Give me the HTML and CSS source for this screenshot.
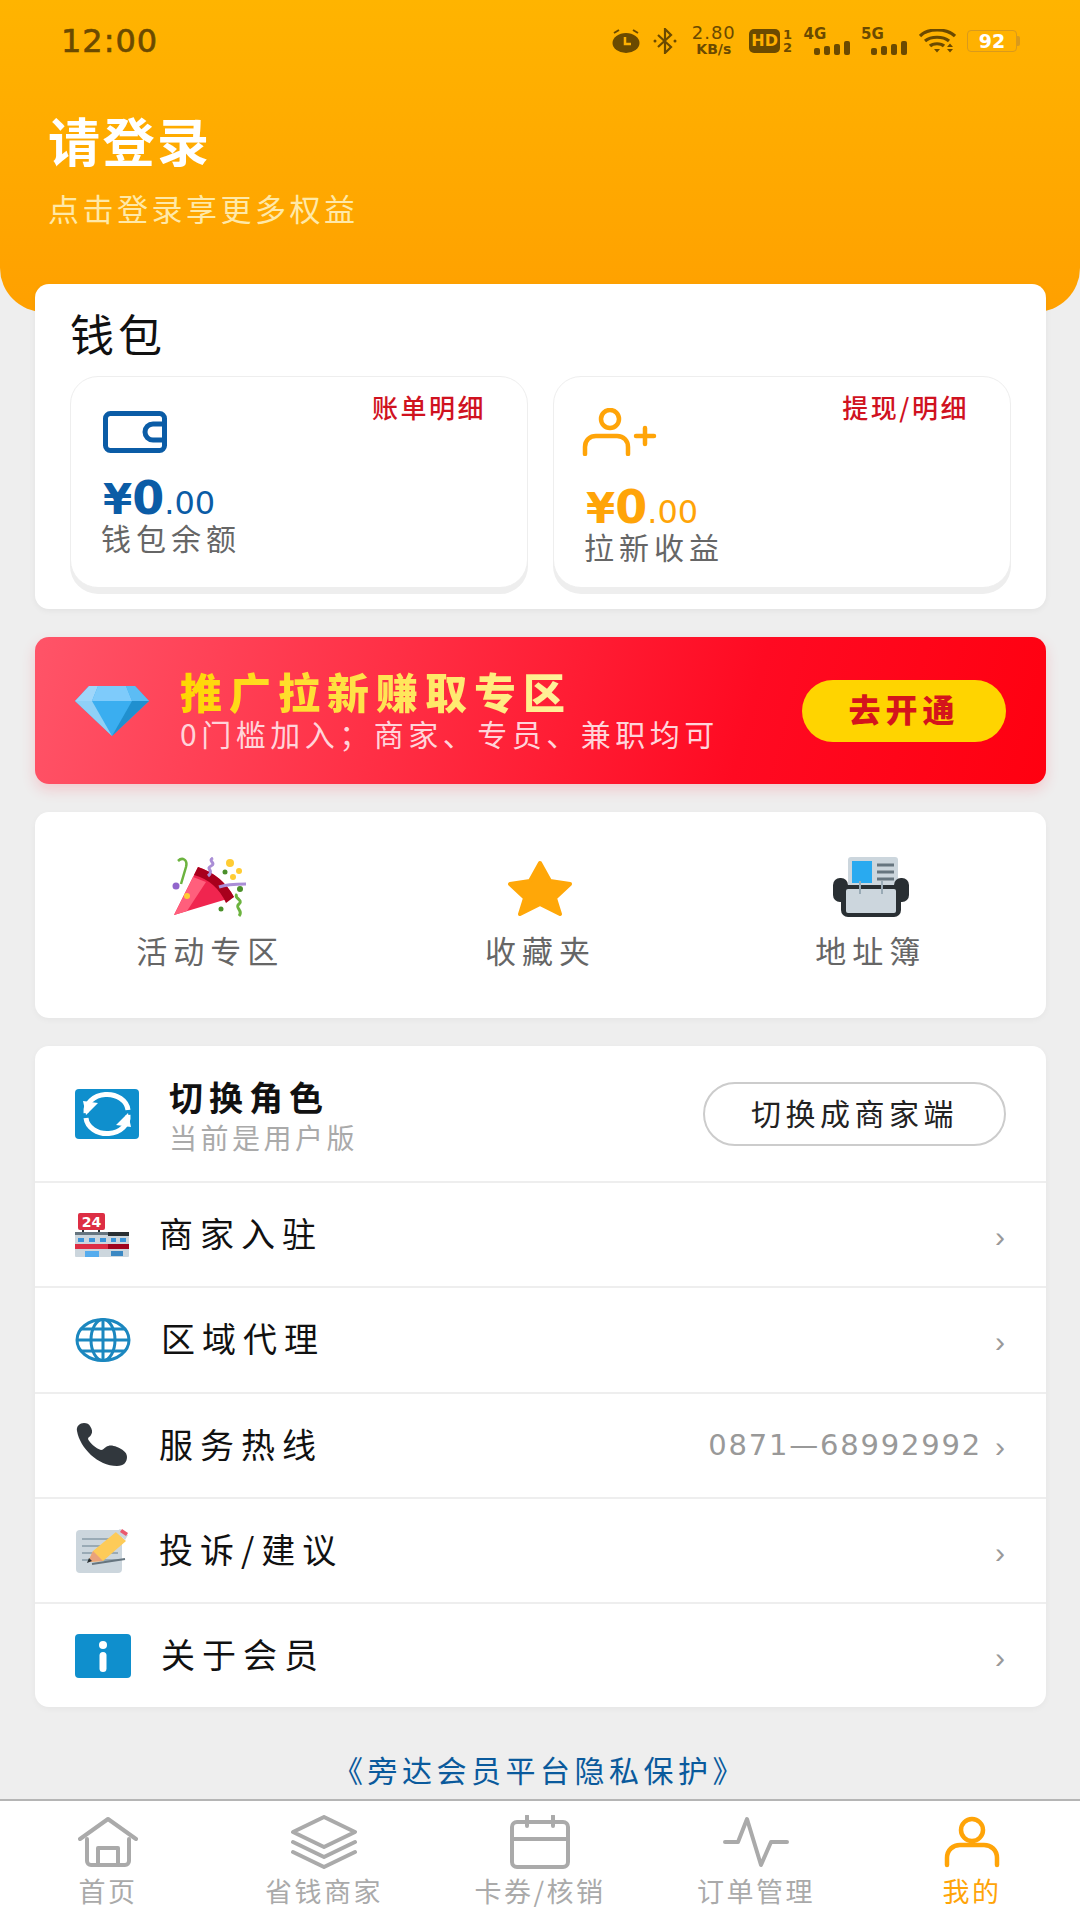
FILE: index.html
```html
<!DOCTYPE html>
<html>

<head>
    <meta name="viewport" content="width=device-width, initial-scale=1, user-scalable=no"/>
    <link rel="stylesheet" href="styles.css">
</head>

<body>
    <div class="page">
        <div class="header">
            <div class="status">
                <span class="time">12:00</span>
                <div class="status-icons">
                    <svg width="30" height="24" viewBox="0 0 30 24"><path d="M3 4l5-3M27 4l-5-3" stroke="#6b4a00" stroke-width="2"/><ellipse cx="15" cy="14" rx="13.500" ry="10" fill="#6b4a00"/><path d="M14 8v7h6" fill="none" stroke="#ffb000" stroke-width="2.500"/></svg>
                    <svg class="ml-bt" width="26" height="26" viewBox="0 0 26 26"><path d="M6 7l13 12-6 6V1l6 6L6 19" fill="none" stroke="#6b4a00" stroke-width="2.200"/><circle cx="3" cy="13" r="1.500" fill="#6b4a00"/><circle cx="23" cy="13" r="1.500" fill="#6b4a00"/></svg>
                    <div class="speed"><span>2.80</span><span class="speed-unit">KB/s</span></div>
                    <div class="hd"><span class="hd-box">HD</span><div class="hd-nums"><span>1</span><span>2</span></div></div>
                    <div class="net"><span>4G</span><svg width="36" height="14" viewBox="0 0 36 14"><rect x="0" y="7" width="6" height="7" rx="2" fill="#6b4a00"/><rect x="10" y="5" width="6" height="9" rx="2" fill="#6b4a00"/><rect x="20" y="3" width="6" height="11" rx="2" fill="#6b4a00"/><rect x="30" y="0" width="6" height="14" rx="2" fill="#6b4a00"/></svg></div>
                    <div class="net"><span>5G</span><svg width="36" height="14" viewBox="0 0 36 14"><rect x="0" y="7" width="6" height="7" rx="2" fill="#6b4a00"/><rect x="10" y="5" width="6" height="9" rx="2" fill="#6b4a00"/><rect x="20" y="3" width="6" height="11" rx="2" fill="#6b4a00"/><rect x="30" y="0" width="6" height="14" rx="2" fill="#6b4a00"/></svg></div>
                    <svg width="37" height="24" viewBox="0 0 37 24"><path d="M1 7c8-8 26-8 35 0M6 12c6-5 18-5 24 0M11 17c3-3 11-3 14 0" fill="none" stroke="#6b4a00" stroke-width="3.200"/><path d="M15 20h6l-3 3.500z" fill="#6b4a00"/><path d="M28 18h6l-3-3.500zM28 20h6l-3 3.500z" fill="#6b4a00"/></svg>
                    <div class="battery"><span class="battery-box">92</span><span class="battery-tip"></span></div>
                </div>
            </div>
            <div class="login-title">请登录</div>
            <div class="login-sub">点击登录享更多权益</div>
        </div>

        <div class="card wallet">
            <div class="wallet-title">钱包</div>
            <div class="wallet-row">
                <div class="wallet-box">
                    <span class="wallet-link">账单明细</span>
                    <svg class="wallet-icon" width="64" height="42" viewBox="0 0 64 42"><rect x="2.500" y="2.500" width="59" height="37" rx="5" fill="none" stroke="#0b5ca6" stroke-width="5"/><path d="M61 13H50a8 8 0 0 0 0 16h11" fill="none" stroke="#0b5ca6" stroke-width="5"/></svg>
                    <div class="money blue">¥<b>0</b><small>.00</small></div>
                    <div class="wallet-label">钱包余额</div>
                </div>
                <div class="wallet-box">
                    <span class="wallet-link">提现/明细</span>
                    <svg class="wallet-icon icon-user" width="76" height="48" viewBox="0 0 76 48"><circle cx="28" cy="11" r="9" fill="none" stroke="#ffa408" stroke-width="4.500"/><path d="M3 46V39c0-7 5-11 11-11h21c7 0 11 5 11 11v7" fill="none" stroke="#ffa408" stroke-width="4.500" stroke-linecap="round"/><path d="M54 28h18M63 20v16" stroke="#ffa408" stroke-width="4.500" stroke-linecap="round"/></svg>
                    <div class="money orange">¥<b>0</b><small>.00</small></div>
                    <div class="wallet-label">拉新收益</div>
                </div>
            </div>
        </div>

        <div class="banner">
            <svg width="74" height="50" viewBox="0 0 74 50"><path d="M14 0h46l14 15-37 35L0 15z" fill="#3aaef0"/><path d="M14 0h9l-6 15H0z" fill="#9fd6fa"/><path d="M23 0h28l6 15H17z" fill="#7ecbfb"/><path d="M51 0h9l14 15H57z" fill="#5cbcf4"/><path d="M0 15h17l20 35z" fill="#8fd0f7"/><path d="M57 15h17L37 50z" fill="#2090cf"/></svg>
            <div class="banner-text">
                <div class="banner-title">推广拉新赚取专区</div>
                <div class="banner-sub">0门槛加入；商家、专员、兼职均可</div>
            </div>
            <div class="banner-btn">去开通</div>
        </div>

        <div class="card quick">
            <div class="quick-item">
                <svg width="76" height="60" viewBox="0 0 76 60">
                    <path d="M2 58L26 10q24 8 36 30z" fill="#f0254f"/>
                    <path d="M26 10q24 8 36 30l-8 6Q44 24 22 18z" fill="#a8001c"/>
                    <path d="M2 58l19-38 13 5-19 29z" fill="#ff5f7c"/>
                    <path d="M9 27l5-17c2-8-4-10-8-6" fill="none" stroke="#6cb33f" stroke-width="2.500"/>
                    <path d="M41 1c-6 3 4 5-2 8s4 4-3 10" fill="none" stroke="#aa8ed6" stroke-width="3"/>
                    <path d="M47 30c8-3 18-3 27-3" fill="none" stroke="#aa8ed6" stroke-width="3"/>
                    <path d="M65 37c-4 4 7 6 2 10s5 6 0 12" fill="none" stroke="#6cb33f" stroke-width="3"/>
                    <circle cx="4" cy="29" r="3.500" fill="#9266cc"/><circle cx="58" cy="6" r="4" fill="#ffcc33"/><circle cx="67" cy="14" r="3" fill="#ffcc33"/><circle cx="53" cy="15" r="2.500" fill="#4a8f2a"/><circle cx="61" cy="20" r="3" fill="#ffcc33"/><circle cx="68" cy="32" r="3" fill="#4a8f2a"/><circle cx="49" cy="52" r="2.500" fill="#4a8f2a"/><circle cx="15" cy="39" r="3" fill="#ffcc33"/>
                </svg>
                <span>活动专区</span>
            </div>
            <div class="quick-item">
                <svg width="76" height="60" viewBox="0 0 76 60"><path d="M38 6l10 18 20 3-15 14 5 16-20-10-20 10 5-16L8 27l20-3z" fill="#ffa708" stroke="#ffa708" stroke-width="4" stroke-linejoin="round"/></svg>
                <span>收藏夹</span>
            </div>
            <div class="quick-item">
                <svg width="76" height="60" viewBox="0 0 76 60">
                    <rect x="15" y="0" width="50" height="34" rx="3" fill="#ccd6dd"/>
                    <rect x="19" y="4" width="20" height="22" fill="#29aaf0"/>
                    <path d="M44 8h17M44 15h17M44 22h17" stroke="#66757f" stroke-width="3"/>
                    <rect x="0" y="21" width="15" height="24" rx="7" fill="#292f33"/>
                    <rect x="61" y="21" width="15" height="24" rx="7" fill="#292f33"/>
                    <rect x="8" y="28" width="60" height="32" rx="7" fill="#292f33"/>
                    <rect x="13" y="32" width="50" height="24" rx="2" fill="#ccd6dd"/>
                    <path d="M27 24v13M49 24v13" stroke="#99aab5" stroke-width="2"/>
                </svg>
                <span>地址簿</span>
            </div>
        </div>

        <div class="card menu">
            <div class="switch-row">
                <svg width="64" height="50" viewBox="0 0 64 50"><rect width="64" height="50" rx="4" fill="#0f8fcd"/><path d="M11 24A21 17 0 0 1 53 21M53 26A21 17 0 0 1 11 29" fill="none" stroke="#fff" stroke-width="5"/><path d="M8 12l15 2-12 12zM56 38l-15-2 12-12z" fill="#fff"/></svg>
                <div class="switch-text">
                    <div class="switch-title">切换角色</div>
                    <div class="switch-sub">当前是用户版</div>
                </div>
                <div class="switch-btn">切换成商家端</div>
            </div>
            <div class="menu-row">
                <svg class="menu-icon" width="54" height="44" viewBox="0 0 54 44">
                    <rect x="3" y="0" width="27" height="17" rx="2" fill="#dd2e44"/>
                    <text x="16.500" y="14" fill="#fff" font-family="DejaVu Sans" font-size="14" font-weight="700" text-anchor="middle">24</text>
                    <path d="M8 17v3M24 17v3" stroke="#292f33" stroke-width="2"/>
                    <rect x="0" y="19" width="54" height="25" rx="1" fill="#ccd6dd"/>
                    <rect x="33" y="19" width="21" height="4" fill="#292f33"/>
                    <rect x="0" y="19" width="33" height="3" fill="#66757f"/>
                    <path d="M3 25h6v4H3zM14 25h6v4h-6zM25 25h6v4h-6zM36 25h5v4h-5zM45 25h6v4h-6z" fill="#3b94d9"/>
                    <rect x="0" y="31" width="54" height="5" fill="#dd2e44"/>
                    <rect x="33" y="31" width="21" height="5" fill="#a0041e"/>
                    <rect x="10" y="38" width="14" height="6" fill="#55acee"/><rect x="36" y="38" width="12" height="5" fill="#3b88c3"/>
                </svg>
                <span class="menu-label">商家入驻</span>
                <span class="chevron">›</span>
            </div>
            <div class="menu-row">
                <svg class="menu-icon" width="56" height="44" viewBox="0 0 56 44"><g fill="none" stroke="#1b87bf" stroke-width="3"><ellipse cx="28" cy="22" rx="26" ry="20.500"/><ellipse cx="28" cy="22" rx="12" ry="20.500"/><path d="M28 1v42M2 22h52M6 11h44M6 33h44"/></g></svg>
                <span class="menu-label">区域代理</span>
                <span class="chevron">›</span>
            </div>
            <div class="menu-row">
                <svg class="menu-icon" width="54" height="44" viewBox="0 0 54 44"><path d="M2 8C1 3 5 0 9 0c3 0 5 1 6 3 2 3 3 6 1 9-1 2-3 2-3 4 1 3 8 10 13 11 2 0 3-2 5-3 3-2 6-2 11 0 5 2 10 5 10 10 0 5-3 9-10 9C23 43 5 25 2 8z" fill="#31373d"/></svg>
                <span class="menu-label">服务热线</span>
                <span class="menu-value">0871—68992992</span>
                <span class="chevron">›</span>
            </div>
            <div class="menu-row">
                <svg class="menu-icon" width="54" height="44" viewBox="0 0 54 44">
                    <rect x="1" y="1" width="46" height="43" rx="4" fill="#ccd6dd"/>
                    <path d="M7 10h36M7 17h36M7 24h36M7 31h36" stroke="#99aab5" stroke-width="2"/>
                    <path d="M13 33l5-11L41 3l10 9-23 20z" fill="#fdcb58"/>
                    <path d="M41 3l4-3 8 6-3 5z" fill="#ccd6dd"/>
                    <path d="M47 0l6 4-2 3-6-4z" fill="#ea596e"/>
                    <path d="M13 33l5-11 10 10z" fill="#e9a27b"/>
                    <path d="M12 34l2-5 3 3z" fill="#292f33"/>
                    <path d="M17 35l33-5" stroke="#66757f" stroke-width="2"/>
                </svg>
                <span class="menu-label">投诉/建议</span>
                <span class="chevron">›</span>
            </div>
            <div class="menu-row">
                <svg class="menu-icon" width="56" height="44" viewBox="0 0 56 44"><rect width="56" height="44" rx="4" fill="#0f8fcd"/><circle cx="28" cy="11" r="4" fill="#fff"/><rect x="24.500" y="18" width="7" height="20" rx="3.500" fill="#fff"/></svg>
                <span class="menu-label">关于会员</span>
                <span class="chevron">›</span>
            </div>
        </div>

        <div class="privacy">《旁达会员平台隐私保护》</div>

        <div class="tabbar">
            <div class="tab">
                <svg width="60" height="50" viewBox="0 0 60 50"><g fill="none" stroke="#aaa" stroke-width="4" stroke-linejoin="round" stroke-linecap="round"><path d="M2 22L30 2l28 20"/><path d="M9 22v22a4 4 0 0 0 4 4h34a4 4 0 0 0 4-4V22"/><path d="M20 48V31h20v17"/></g></svg>
                <span>首页</span>
            </div>
            <div class="tab">
                <svg width="66" height="54" viewBox="0 0 66 54"><g fill="none" stroke="#aaa" stroke-width="4" stroke-linejoin="round" stroke-linecap="round"><path d="M33 2l31 15-31 15L2 17z"/><path d="M2 27l31 15 31-15"/><path d="M2 37l31 15 31-15"/></g></svg>
                <span>省钱商家</span>
            </div>
            <div class="tab">
                <svg width="60" height="54" viewBox="0 0 60 54"><g fill="none" stroke="#aaa" stroke-width="4" stroke-linecap="round"><rect x="2" y="7" width="56" height="45" rx="5"/><path d="M2 24h56M17 1v10M43 1v10"/></g></svg>
                <span>卡券/核销</span>
            </div>
            <div class="tab">
                <svg width="66" height="50" viewBox="0 0 66 50"><path d="M2 25h13L24 2l14 46 10-23h16" fill="none" stroke="#aaa" stroke-width="4" stroke-linejoin="round" stroke-linecap="round"/></svg>
                <span>订单管理</span>
            </div>
            <div class="tab active">
                <svg width="56" height="50" viewBox="0 0 56 50"><g fill="none" stroke="#ffa408" stroke-width="4.500" stroke-linecap="round"><circle cx="28" cy="13" r="11"/><path d="M3 48V41c0-8 6-13 13-13h24c7 0 13 5 13 13v7"/></g></svg>
                <span>我的</span>
            </div>
        </div>
    </div>
</body>

</html>
```

FILE: styles.css
```css
* {
    box-sizing: border-box;
}

body {
    margin: 0;
    background: #eeeeee;
    font-family: "Noto Sans CJK SC", "Noto Sans", sans-serif;
}

.page {
    display: flex;
    flex-direction: column;
    height: 1920px;
    overflow: hidden;
}

/* header */
.header {
    height: 312px;
    padding: 0 48px;
    background: linear-gradient(180deg, #ffb400, #ffa000);
    border-radius: 0 0 44px 44px;
}

.status {
    display: flex;
    align-items: center;
    justify-content: space-between;
    height: 82px;
    padding: 0 12px 0 13px;
    color: #6b4a00;
}

.time {
    font-family: "DejaVu Sans", sans-serif;
    font-size: 32px;
    letter-spacing: 1px;
    -webkit-text-stroke: 0.6px #6b4a00;
}

.status-icons {
    display: flex;
    align-items: center;
    gap: 11.500px;
    font-family: "DejaVu Sans", sans-serif;
}

.speed {
    display: flex;
    flex-direction: column;
    align-items: center;
    width: 48px;
    font-size: 18px;
    line-height: 17px;
    letter-spacing: 1px;
}

.speed-unit {
    font-size: 14px;
    font-weight: 700;
    letter-spacing: 0;
}

.hd {
    display: flex;
    align-items: center;
    gap: 3px;
}

.hd-box {
    padding: 0 2px;
    background: #6b4a00;
    border-radius: 5px;
    color: #ffb000;
    font-size: 16px;
    font-weight: 700;
    line-height: 24px;
}

.hd-nums {
    display: flex;
    flex-direction: column;
    font-size: 13px;
    font-weight: 700;
    line-height: 13px;
}

.net {
    display: flex;
    flex-direction: column;
    width: 46px;
    font-size: 15px;
    font-weight: 700;
    line-height: 13px;
}

.net svg {
    align-self: flex-end;
}

.battery {
    display: flex;
    align-items: center;
}

.battery-box {
    width: 50px;
    height: 22px;
    border: 1px solid #d99a1c;
    border-radius: 4px;
    color: #fff;
    font-size: 19px;
    font-weight: 700;
    line-height: 20px;
    text-align: center;
}

.battery-tip {
    width: 3px;
    height: 10px;
    background: #d99a1c;
    border-radius: 0 2px 2px 0;
}

.login-title {
    margin-top: 30px;
    color: #fff;
    font-size: 52px;
    font-weight: 700;
    letter-spacing: 2.500px;
    line-height: 56px;
}

.login-sub {
    margin-top: 20px;
    color: #ffe9a8;
    font-size: 31px;
    letter-spacing: 3.500px;
    line-height: 40px;
}

/* cards */
.card {
    margin: 0 34px 0 35px;
    background: #fff;
    border-radius: 14px;
}

.wallet {
    position: relative;
    height: 325px;
    margin-top: -28px;
    padding: 22px 35px 0;
    box-shadow: 0 2px 6px rgba(0, 0, 0, 0.05);
}

.wallet-title {
    color: #111;
    font-size: 44px;
    letter-spacing: 4px;
    line-height: 54px;
}

.wallet-row {
    display: flex;
    gap: 25px;
    margin-top: 16px;
}

.wallet-box {
    position: relative;
    width: 459px;
    height: 212px;
    padding: 34px 32px 0;
    background: #fff;
    border: 1px solid #eee;
    border-radius: 28px;
    box-shadow: 0 6px 0 #eeeeee;
}

.wallet-link {
    position: absolute;
    top: 11px;
    right: 41px;
    color: #d0121f;
    font-size: 26px;
    font-weight: 500;
    letter-spacing: 2.500px;
}

.wallet-icon {
    display: block;
}

.icon-user {
    margin: -3px 0 0 -4px;
}

.money {
    height: 40px;
    margin-top: 25px;
    font-family: "DejaVu Sans", sans-serif;
    font-size: 42px;
    font-weight: 700;
    line-height: 40px;
}

.money b {
    font-size: 46px;
    font-weight: 700;
}

.money small {
    font-size: 32px;
    font-weight: 400;
}

.blue {
    color: #0b5ca6;
}

.orange {
    margin-top: 31px;
    color: #ffa408;
}

.wallet-label {
    margin-top: -1px;
    margin-left: -2px;
    color: #666;
    font-size: 30px;
    letter-spacing: 5px;
    line-height: 40px;
}

/* banner */
.banner {
    display: flex;
    align-items: center;
    height: 147px;
    margin: 28px 34px 0 35px;
    padding: 0 40px 0 40px;
    background: linear-gradient(105deg, #ff5468, #ff0a22 70%, #ff0010);
    border-radius: 14px;
    box-shadow: 0 6px 14px rgba(255, 60, 80, 0.2);
}

.banner-text {
    flex: 1;
    margin: -3px 0 0 31px;
}

.banner-title {
    display: inline-block;
    background: linear-gradient(90deg, #ffd600, #fff2a0);
    -webkit-background-clip: text;
    background-clip: text;
    color: transparent;
    font-size: 42px;
    font-weight: 900;
    letter-spacing: 7px;
    line-height: 50px;
}

.banner-sub {
    margin-top: -2px;
    color: #ffd4da;
    font-size: 30px;
    letter-spacing: 4.500px;
    line-height: 38px;
}

.banner-btn {
    width: 204px;
    height: 62px;
    background: #ffd400;
    border-radius: 31px;
    color: #d4141c;
    font-size: 32px;
    font-weight: 900;
    letter-spacing: 5px;
    line-height: 57px;
    text-align: center;
}

/* quick links */
.quick {
    display: grid;
    grid-template-columns: repeat(3, 1fr);
    height: 206px;
    margin-top: 28px;
    padding: 45px 10px 0;
    box-shadow: 0 2px 6px rgba(0, 0, 0, 0.04);
}

.quick-item {
    display: flex;
    flex-direction: column;
    align-items: center;
    color: #666;
    font-size: 31px;
    letter-spacing: 6px;
    line-height: 40px;
}

.quick-item span {
    margin-top: 13px;
}

/* menu */
.menu {
    margin-top: 28px;
    box-shadow: 0 2px 6px rgba(0, 0, 0, 0.04);
}

.switch-row {
    display: flex;
    align-items: center;
    height: 135px;
    padding: 0 40px;
}

.switch-text {
    flex: 1;
    margin-left: 30px;
    padding-top: 3px;
}

.switch-title {
    color: #111;
    font-size: 34px;
    font-weight: 700;
    letter-spacing: 6px;
    line-height: 44px;
}

.switch-sub {
    color: #aaa;
    font-size: 28px;
    letter-spacing: 3.500px;
    line-height: 36px;
}

.switch-btn {
    width: 303px;
    height: 64px;
    border: 2px solid #ccc;
    border-radius: 32px;
    color: #222;
    font-size: 30px;
    letter-spacing: 4.500px;
    line-height: 56px;
    text-align: center;
}

.menu-row {
    display: flex;
    align-items: center;
    height: 105.300px;
    padding: 0 40px;
    border-top: 2px solid #eeeeee;
}

.menu-icon {
    flex: none;
}

.menu-label {
    flex: 1;
    margin: 0 0 4px 30px;
    color: #111;
    font-size: 34px;
    letter-spacing: 7px;
}

.menu-value {
    color: #999;
    font-family: "DejaVu Sans", sans-serif;
    font-size: 29px;
    letter-spacing: 1.800px;
}

.chevron {
    width: 24px;
    margin-top: 4px;
    padding-right: 1px;
    color: #999;
    font-family: "Liberation Sans", sans-serif;
    font-size: 30px;
    text-align: right;
}

.privacy {
    margin-top: 42px;
    color: #0a5a9c;
    font-size: 30px;
    letter-spacing: 4.500px;
    line-height: 40px;
    text-align: center;
}

/* bottom tabs */
.tabbar {
    display: grid;
    grid-template-columns: repeat(5, 1fr);
    height: 121px;
    margin-top: auto;
    padding-top: 14px;
    background: #fff;
    border-top: 2px solid #b5b5b5;
}

.tab {
    display: flex;
    flex-direction: column;
    align-items: center;
    color: #aaa;
    font-size: 27px;
    letter-spacing: 2.500px;
    line-height: 34px;
}

.tab svg {
    height: 54px;
}

.tab span {
    margin-top: 5px;
}

.active {
    color: #ffa408;
}
```
